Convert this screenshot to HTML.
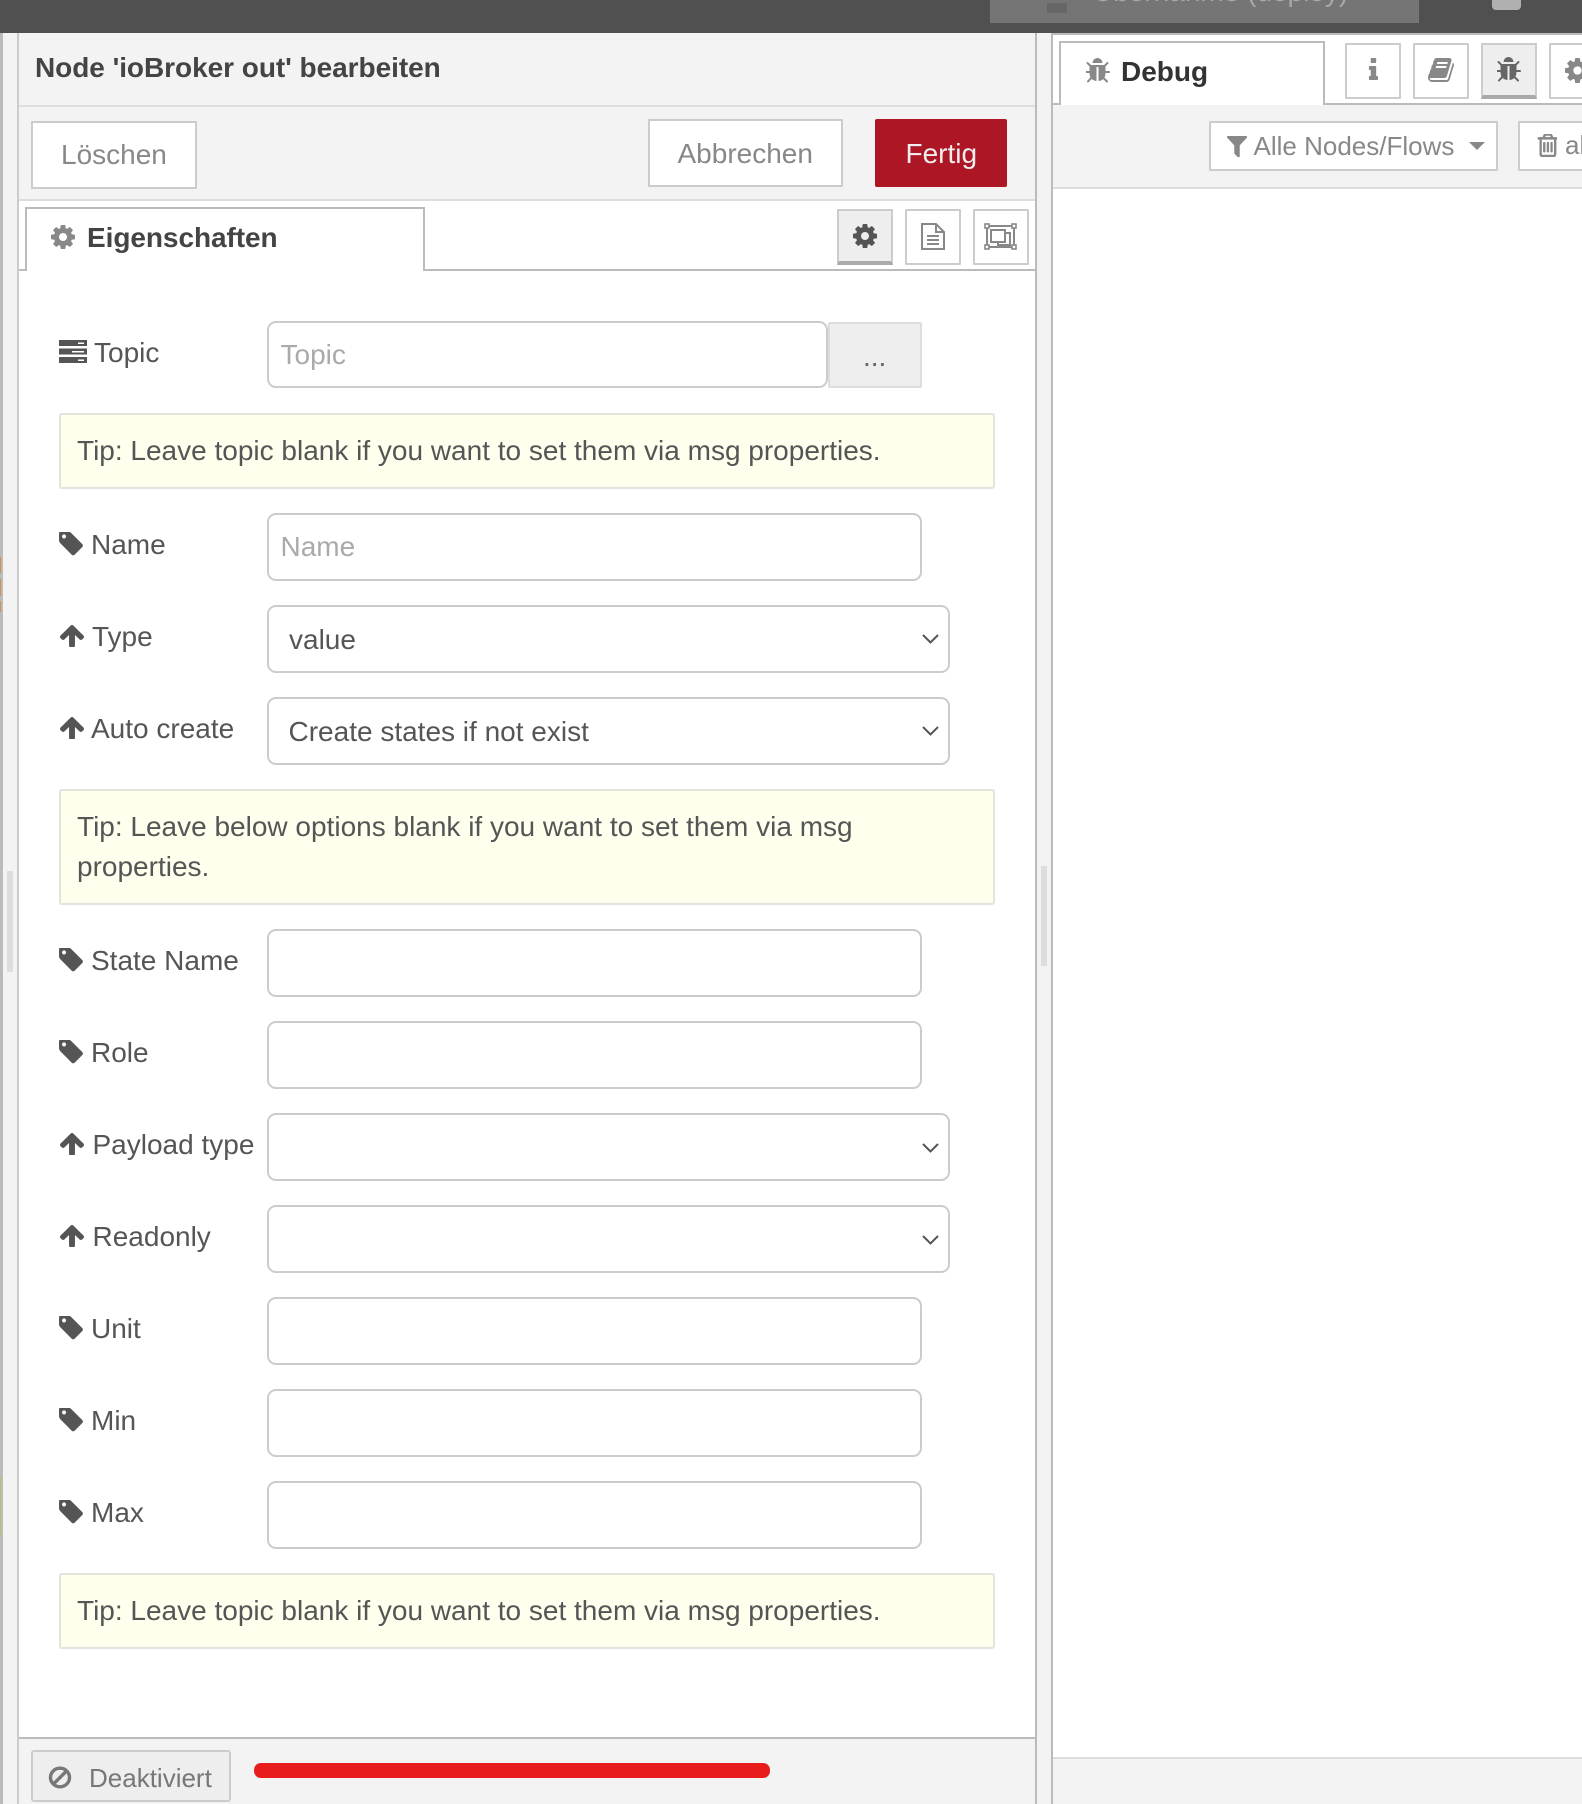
<!DOCTYPE html>
<html lang="de"><head><meta charset="utf-8"><title>Node-RED</title>
<style>
html,body{margin:0;padding:0;background:#fff}
#p{position:relative;width:1582px;height:1804px;overflow:hidden;background:#fff;font-family:"Liberation Sans",Arial,sans-serif;font-size:28px;color:#555}
#p div{position:absolute;box-sizing:border-box}
#p svg{position:absolute;display:block}
.t{white-space:nowrap;line-height:32px;height:32px}
.b{font-weight:700}
.in{background:#fff;border:2px solid #ccc;border-radius:9px}
.tip{background:#ffe;border:2px solid #e4e4dc;border-radius:3px;left:59px;width:936px}
.btn{background:#fff;border:2px solid #ccc;border-radius:1px}
.ph{color:#aaa}
.g{color:#888}
</style></head><body><div id="p">
<svg width="0" height="0" style="position:absolute"><defs>
<symbol id="cog" viewBox="128 128 1536 1536"><path d="M1152 896q0-106-75-181t-181-75-181 75-75 181 75 181 181 75 181-75 75-181zm512-109v222q0 12-8 23t-20 13l-185 28q-19 54-39 91 35 50 107 138 10 12 10 25t-9 23q-27 37-99 108t-94 71q-12 0-26-9l-138-108q-44 23-91 38-16 136-29 186-7 28-36 28h-222q-14 0-24.500-8.500t-11.500-21.500l-28-184q-49-16-90-37l-141 107q-10 9-25 9-14 0-25-11-126-114-165-168-7-10-7-23 0-12 8-23 15-21 51-66.500t54-70.500q-27-50-41-99l-183-27q-13-2-21-12.500t-8-23.500v-222q0-12 8-23t19-13l186-28q14-46 39-92-40-57-107-138-10-12-10-24 0-10 9-23 26-36 98.500-107.500t94.500-71.500q13 0 26 10l138 107q44-23 91-38 16-136 29-186 7-28 36-28h222q14 0 24.500 8.500t11.500 21.500l28 184q49 16 90 37l142-107q9-9 24-9 13 0 25 10 129 119 165 170 7 8 7 22 0 12-8 23-15 21-51 66.500t-54 70.500q26 50 41 98l183 28q13 2 21 12.500t8 23.500z" fill="currentColor"/></symbol>
<symbol id="tag" viewBox="128 192 1520 1470"><path d="M576 448q0-53-37.500-90.500t-90.500-37.500-90.500 37.500-37.500 90.500 37.500 90.500 90.500 37.500 90.500-37.500 37.500-90.500zm1067 576q0 53-37 90l-491 492q-39 37-91 37-53 0-90-37l-715-716q-38-37-64.500-101t-26.500-117v-416q0-52 38-90t90-38h416q53 0 117 26.500t102 64.500l715 714q37 39 37 91z" fill="currentColor"/></symbol>
<symbol id="up" viewBox="117 192 1558 1440" preserveAspectRatio="none"><path d="M1675 971q0 51-37 90l-75 75q-38 38-91 38-54 0-90-38l-294-293v704q0 52-37.500 84.500t-90.500 32.500h-128q-53 0-90.500-32.500t-37.500-84.500v-704l-294 293q-36 38-90 38t-90-38l-75-75q-38-38-38-90 0-53 38-91l651-651q35-37 90-37 54 0 91 37l651 651q37 39 37 91z" fill="currentColor"/></symbol>
<symbol id="bug" viewBox="160 64 1472 1600"><path d="M1632 960q0 26-19 45t-45 19h-224q0 171-67 290l208 209q19 19 19 45t-19 45q-18 19-45 19t-45-19l-198-197q-5 5-15 13t-42 28.500-65 36.500-82 29-97 13v-896h-128v896q-51 0-101.500-13.500t-87-33-66-39-43.500-32.500l-15-14-183 207q-20 21-48 21-24 0-43-16-19-18-20.500-44.500t15.500-46.500l202-227q-58-114-58-274h-224q-26 0-45-19t-19-45 19-45 45-19h224v-294l-173-173q-19-19-19-45t19-45 45-19 45 19l173 173h844l173-173q19-19 45-19t45 19 19 45-19 45l-173 173v294h224q26 0 45 19t19 45zm-480-576h-640q0-133 93.500-226.500t226.500-93.500 226.500 93.500 93.500 226.500z" fill="currentColor"/></symbol>
</defs></svg>

<!-- left strip -->
<div style="left:0;top:33px;width:3px;height:1771px;background:#bbb"></div>
<div style="left:3px;top:33px;width:15px;height:1771px;background:#f3f3f3"></div>
<div style="left:17px;top:33px;width:2px;height:1771px;background:#ccc"></div>
<div style="left:7px;top:871px;width:6px;height:101px;background:#ddd"></div>
<div style="left:0;top:557px;width:1px;height:16px;background:#d09050"></div>
<div style="left:0;top:579px;width:1px;height:17px;background:#d09050"></div>
<div style="left:0;top:601px;width:1px;height:11px;background:#d09050"></div>
<div style="left:0;top:1476px;width:1px;height:59px;background:#bdbd70"></div>

<!-- header -->
<div style="left:19px;top:33px;width:1016px;height:168px;background:#f3f3f3"></div>
<div style="left:19px;top:105px;width:1016px;height:2px;background:#ddd"></div>
<div style="left:19px;top:199px;width:1016px;height:2px;background:#ddd"></div>
<div class="t b" style="left:35px;top:52px;color:#444;letter-spacing:-.04px">Node 'ioBroker out' bearbeiten</div>
<div class="btn" style="left:31px;top:121px;width:166px;height:68px"></div>
<div class="t g" style="left:61px;top:139px">Löschen</div>
<div class="btn" style="left:648px;top:119px;width:195px;height:68px"></div>
<div class="t g" style="left:677.500px;top:138px">Abbrechen</div>
<div style="left:875px;top:119px;width:132px;height:68px;background:#ad1625;border-radius:2px"></div>
<div class="t" style="left:905.500px;top:138px;color:#eee">Fertig</div>

<!-- tabs -->
<div style="left:19px;top:269px;width:1016px;height:2px;background:#bbb"></div>
<div style="left:25px;top:207px;width:400px;height:64px;background:#fff;border:2px solid #bbb;border-bottom:0"></div>
<svg style="left:51px;top:225px;color:#888" width="24" height="24"><use href="#cog"/></svg>
<div class="t b" style="left:87px;top:222px;color:#444;letter-spacing:-.06px">Eigenschaften</div>
<div style="left:837px;top:209px;width:56px;height:56px;background:#eee;border:2px solid #ccc;border-bottom:4px solid #aaa"></div>
<svg style="left:853px;top:224px;color:#555" width="24" height="24"><use href="#cog"/></svg>
<div class="btn" style="left:905px;top:209px;width:56px;height:56px"></div>
<svg style="left:921px;top:223px" width="24" height="27" viewBox="0 0 24 27" fill="none" stroke="#888" stroke-width="2"><path d="M1 1h14l8 8v17H1z"/><path d="M15 1v8h8"/><path d="M6 13h12M6 17h12M6 21h12"/></svg>
<div class="btn" style="left:973px;top:209px;width:56px;height:56px"></div>
<svg style="left:984px;top:223px" width="33" height="27" viewBox="0 0 33 27" fill="none" stroke="#888" stroke-width="2"><path d="M3 3h27v21H3z"/><path d="M7 7h14v12H7z"/><path d="M14 19v3h12V10h-5"/><g fill="#fff" stroke-width="1.600"><rect x="1" y="1" width="4" height="4"/><rect x="28" y="1" width="4" height="4"/><rect x="1" y="22" width="4" height="4"/><rect x="28" y="22" width="4" height="4"/></g></svg>

<!-- right edge of panel -->
<div style="left:1035px;top:33px;width:2px;height:1771px;background:#bbb"></div>
<div style="left:1037px;top:33px;width:14px;height:1771px;background:#f3f3f3"></div>
<div style="left:1051px;top:33px;width:2px;height:1771px;background:#bbb"></div>
<div style="left:1041px;top:866px;width:6px;height:100px;background:#ddd"></div>

<!-- form -->
<svg style="left:59px;top:340px" width="28" height="23" viewBox="0 0 28 23"><path d="M0 0h28v6H0zM0 8.500h28v6H0zM0 17h28v6H0z" fill="#555"/><path d="M19 2.500h6v1.500h-6zM13 11h12v1.500H13zM19 19.500h6V21h-6z" fill="#fff"/></svg>
<div class="t" style="left:94px;top:337px">Topic</div>
<div class="in" style="left:267px;top:321px;width:561px;height:67px"></div>
<div class="t ph" style="left:280.500px;top:339px">Topic</div>
<div style="left:828px;top:322px;width:94px;height:66px;background:#eee;border:2px solid #ddd;border-radius:2px"></div>
<div class="t" style="left:863px;top:341px;color:#666">...</div>

<div class="tip" style="top:413px;height:76px"></div>
<div class="t" style="left:77px;top:435px">Tip: Leave topic blank if you want to set them via msg properties.</div>

<svg style="left:59px;top:532px;color:#555" width="24" height="24"><use href="#tag"/></svg>
<div class="t" style="left:91px;top:529px">Name</div>
<div class="in" style="left:267px;top:513px;width:655px;height:68px"></div>
<div class="t ph" style="left:280.500px;top:531px">Name</div>

<svg style="left:60px;top:625px;color:#555" width="24" height="22"><use href="#up"/></svg>
<div class="t" style="left:92px;top:621px">Type</div>
<div class="in" style="left:267px;top:605px;width:683px;height:68px"></div>
<div class="t" style="left:289px;top:624px">value</div>
<svg style="left:922px;top:634px" width="17" height="10" viewBox="0 0 17 10" fill="none" stroke="#555" stroke-width="2"><path d="M1 1l7.500 7.500L16 1"/></svg>

<svg style="left:60px;top:717px;color:#555" width="24" height="22"><use href="#up"/></svg>
<div class="t" style="left:91px;top:713px">Auto create</div>
<div class="in" style="left:267px;top:697px;width:683px;height:68px"></div>
<div class="t" style="left:288.500px;top:716px">Create states if not exist</div>
<svg style="left:922px;top:726px" width="17" height="10" viewBox="0 0 17 10" fill="none" stroke="#555" stroke-width="2"><path d="M1 1l7.500 7.500L16 1"/></svg>

<div class="tip" style="top:789px;height:116px"></div>
<div class="t" style="left:77px;top:811px">Tip: Leave below options blank if you want to set them via msg</div>
<div class="t" style="left:77px;top:851px">properties.</div>

<svg style="left:59px;top:948px;color:#555" width="24" height="24"><use href="#tag"/></svg>
<div class="t" style="left:91px;top:945px">State Name</div>
<div class="in" style="left:267px;top:929px;width:655px;height:68px"></div>

<svg style="left:59px;top:1040px;color:#555" width="24" height="24"><use href="#tag"/></svg>
<div class="t" style="left:91px;top:1037px">Role</div>
<div class="in" style="left:267px;top:1021px;width:655px;height:68px"></div>

<svg style="left:60px;top:1133px;color:#555" width="24" height="22"><use href="#up"/></svg>
<div class="t" style="left:92.500px;top:1129px">Payload type</div>
<div class="in" style="left:267px;top:1113px;width:683px;height:68px"></div>
<svg style="left:922px;top:1143px" width="17" height="10" viewBox="0 0 17 10" fill="none" stroke="#555" stroke-width="2"><path d="M1 1l7.500 7.500L16 1"/></svg>

<svg style="left:60px;top:1225px;color:#555" width="24" height="22"><use href="#up"/></svg>
<div class="t" style="left:92.500px;top:1221px">Readonly</div>
<div class="in" style="left:267px;top:1205px;width:683px;height:68px"></div>
<svg style="left:922px;top:1235px" width="17" height="10" viewBox="0 0 17 10" fill="none" stroke="#555" stroke-width="2"><path d="M1 1l7.500 7.500L16 1"/></svg>

<svg style="left:59px;top:1316px;color:#555" width="24" height="24"><use href="#tag"/></svg>
<div class="t" style="left:91px;top:1313px">Unit</div>
<div class="in" style="left:267px;top:1297px;width:655px;height:68px"></div>

<svg style="left:59px;top:1408px;color:#555" width="24" height="24"><use href="#tag"/></svg>
<div class="t" style="left:91px;top:1405px">Min</div>
<div class="in" style="left:267px;top:1389px;width:655px;height:68px"></div>

<svg style="left:59px;top:1500px;color:#555" width="24" height="24"><use href="#tag"/></svg>
<div class="t" style="left:91px;top:1497px">Max</div>
<div class="in" style="left:267px;top:1481px;width:655px;height:68px"></div>

<div class="tip" style="top:1573px;height:76px"></div>
<div class="t" style="left:77px;top:1595px">Tip: Leave topic blank if you want to set them via msg properties.</div>

<!-- footer -->
<div style="left:19px;top:1737px;width:1016px;height:67px;background:#f3f3f3;border-top:2px solid #bbb"></div>
<div style="left:31px;top:1750px;width:200px;height:52px;background:#eee;border:2px solid #ccc;border-radius:3px"></div>
<svg style="left:48px;top:1766px" width="24" height="23" viewBox="0 0 24 23" fill="none" stroke="#777" stroke-width="3.400"><ellipse cx="12" cy="11.500" rx="9.500" ry="9.300"/><path d="M5.500 18L18.500 5"/></svg>
<div class="t" style="left:89px;top:1762px;color:#777;font-size:26px">Deaktiviert</div>
<div style="left:254px;top:1763px;width:516px;height:15px;background:#e81c1c;border-radius:7px"></div>

<!-- right sidebar -->
<div style="left:1053px;top:33px;width:529px;height:2px;background:#bbb"></div>
<div style="left:1053px;top:103px;width:529px;height:2px;background:#bbb"></div>
<div style="left:1053px;top:105px;width:529px;height:82px;background:#f3f3f3"></div>
<div style="left:1053px;top:187px;width:529px;height:2px;background:#ddd"></div>
<div style="left:1059px;top:41px;width:266px;height:64px;background:#fff;border:2px solid #bbb;border-bottom:0"></div>
<svg style="left:1086px;top:58px;color:#888" width="25" height="25"><use href="#bug"/></svg>
<div class="t b" style="left:1121px;top:56px;color:#333">Debug</div>

<div class="btn" style="left:1345px;top:43px;width:56px;height:56px"></div>
<svg style="left:1368px;top:58px" width="10" height="22" viewBox="512 128 704 1408" preserveAspectRatio="none"><path d="M1216 1344v128q0 26-19 45t-45 19h-512q-26 0-45-19t-19-45v-128q0-26 19-45t45-19h64v-384h-64q-26 0-45-19t-19-45v-128q0-26 19-45t45-19h384q26 0 45 19t19 45v576h64q26 0 45 19t19 45zm-128-1152v192q0 26-19 45t-45 19h-256q-26 0-45-19t-19-45v-192q0-26 19-45t45-19h256q26 0 45 19t19 45z" fill="#888"/></svg>
<div class="btn" style="left:1413px;top:43px;width:56px;height:56px"></div>
<svg style="left:1428px;top:58px" width="26" height="24" viewBox="64 128 1664 1536" preserveAspectRatio="none"><path d="M1703 478q40 57 18 129l-275 906q-19 64-76.500 107.500t-122.500 43.500h-923q-77 0-148.500-53.500t-99.500-131.500q-24-67-2-127 0-4 3-27t4-37q1-8-3-21.500t-3-19.500q2-11 8-21t16.500-23.500 16.500-23.500q23-38 45-91.500t30-91.500q3-10 .500-30t-.500-28q3-11 17-28t17-23q21-36 42-92t25-90q1-9-2.500-32t.500-28q4-13 22-30.500t22-22.500q19-26 42.500-84.500t27.500-96.500q1-8-3-25.500t-2-26.500q2-8 9-18t18-23 17-21q8-12 16.500-30.500t15-35 16-36 19.500-32 26.500-23.500 36-11.500 47.500 5.500l-1 3q38-9 51-9h761q74 0 114 56t18 130l-274 906q-36 119-71.500 153.500t-128.500 34.500h-869q-27 0-38 15-11 16-1 43 24 70 144 70h923q29 0 56-15.500t35-41.500l300-987q7-22 5-57 38 15 59 43zm-1064 2q-4 13 2 22.500t20 9.500h608q13 0 25.500-9.500t16.500-22.500l21-64q4-13-2-22.500t-20-9.500h-608q-13 0-25.500 9.500t-16.500 22.500zm-83 256q-4 13 2 22.500t20 9.500h608q13 0 25.500-9.500t16.500-22.500l21-64q4-13-2-22.500t-20-9.500h-608q-13 0-25.500 9.500t-16.500 22.500z" fill="#888"/></svg>
<div style="left:1481px;top:43px;width:56px;height:56px;background:#eee;border:2px solid #ccc;border-bottom:4px solid #aaa"></div>
<svg style="left:1497px;top:57px;color:#666" width="25" height="25"><use href="#bug"/></svg>
<div class="btn" style="left:1549px;top:43px;width:56px;height:56px"></div>
<svg style="left:1565px;top:58px;color:#888" width="25" height="25"><use href="#cog"/></svg>

<div class="btn" style="left:1209px;top:121px;width:289px;height:50px"></div>
<svg style="left:1226px;top:136px" width="22" height="21" viewBox="128 256 1536 1344" preserveAspectRatio="none"><path d="M1595 295q17 41-14 70l-493 493v742q0 42-39 59-13 5-25 5-27 0-45-19l-256-256q-19-19-19-45v-486l-493-493q-31-29-14-70 17-39 59-39h1280q42 0 59 39z" fill="#888"/></svg>
<div class="t g" style="left:1253.500px;top:130px;font-size:26px">Alle Nodes/Flows</div>
<svg style="left:1469px;top:142px" width="16" height="8" viewBox="0 0 16 8"><path d="M0 0h16L8 8z" fill="#888"/></svg>
<div class="btn" style="left:1518px;top:121px;width:90px;height:50px"></div>
<svg style="left:1537px;top:134px" width="20" height="23" viewBox="128 160 1408 1504" preserveAspectRatio="none"><path d="M704 736v576q0 14-9 23t-23 9h-64q-14 0-23-9t-9-23v-576q0-14 9-23t23-9h64q14 0 23 9t9 23zm256 0v576q0 14-9 23t-23 9h-64q-14 0-23-9t-9-23v-576q0-14 9-23t23-9h64q14 0 23 9t9 23zm256 0v576q0 14-9 23t-23 9h-64q-14 0-23-9t-9-23v-576q0-14 9-23t23-9h64q14 0 23 9t9 23zm128 724v-948h-896v948q0 22 7 40.500t14.500 27 10.500 8.500h832q3 0 10.500-8.500t14.500-27 7-40.500zm-672-1076h448l-48-117q-7-9-17-11h-317q-10 2-17 11zm928 32v64q0 14-9 23t-23 9h-96v948q0 83-47 143.500t-113 60.500h-832q-66 0-113-58.500t-47-141.500v-952h-96q-14 0-23-9t-9-23v-64q0-14 9-23t23-9h309l70-167q15-37 54-63t79-26h320q40 0 79 26t54 63l70 167h309q14 0 23 9t9 23z" fill="#888" stroke="#888" stroke-width="36"/></svg>
<div class="t g" style="left:1565px;top:129px;font-size:26px">al</div>
<div style="left:1053px;top:1757px;width:529px;height:47px;background:#f3f3f3;border-top:2px solid #ddd"></div>

<!-- top bar -->
<div style="left:0;top:0;width:1582px;height:33px;background:#505050"></div>
<div style="left:990px;top:0;width:429px;height:23px;background:#757575;overflow:hidden">
  <div class="t" style="left:103px;top:-24px;color:#a8a8a8">Übernahme (deploy)</div>
  <div style="left:57px;top:3px;width:20px;height:10px;background:#666"></div>
</div>
<div style="left:1492px;top:0;width:29px;height:10px;background:#b0b0b0;border-radius:0 0 4px 4px"></div>
</div></body></html>
